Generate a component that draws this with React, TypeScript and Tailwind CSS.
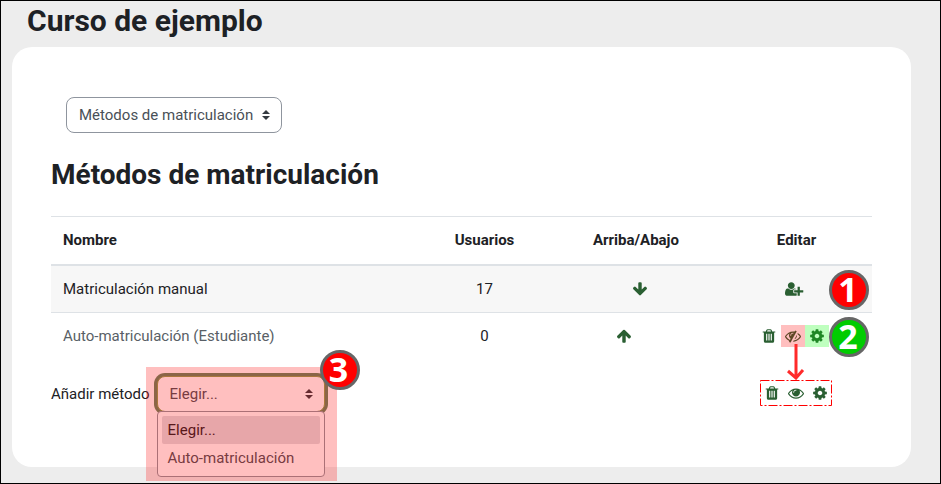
import { useState } from 'react';
import type { ReactNode } from 'react';
import clsx from 'clsx';

const iconPaths = {
  trash: 'M704 1376v-704q0-14-9-23t-23-9h-64q-14 0-23 9t-9 23v704q0 14 9 23t23 9h64q14 0 23-9t9-23zm256 0v-704q0-14-9-23t-23-9h-64q-14 0-23 9t-9 23v704q0 14 9 23t23 9h64q14 0 23-9t9-23zm256 0v-704q0-14-9-23t-23-9h-64q-14 0-23 9t-9 23v704q0 14 9 23t23 9h64q14 0 23-9t9-23zm-544-992h448l-48-117q-7-9-17-11h-317q-10 2-17 11zm928 32v64q0 14-9 23t-23 9h-96v948q0 83-47 143.5t-113 60.5h-832q-66 0-113-58.5t-47-141.5v-952h-96q-14 0-23-9t-9-23v-64q0-14 9-23t23-9h309l70-167q15-37 54-63t79-26h320q40 0 79 26t54 63l70 167h309q14 0 23 9t9 23z',
  cog: 'M1152 896q0-106-75-181t-181-75-181 75-75 181 75 181 181 75 181-75 75-181zm512-109v222q0 12-8 23t-20 13l-185 28q-19 54-39 91 35 50 107 138 10 12 10 25t-9 23q-27 37-99 108t-94 71q-12 0-26-9l-138-108q-44 23-91 38-16 136-29 186-7 28-36 28h-222q-14 0-24.5-8.5t-11.5-21.5l-28-184q-49-16-90-37l-141 107q-10 9-25 9-14 0-25-11-126-114-165-168-7-10-7-23 0-12 8-23 15-21 51-66.5t54-70.5q-27-50-41-99l-183-27q-13-2-21-12.5t-8-23.5v-222q0-12 8-23t19-13l186-28q14-46 39-92-40-57-107-138-10-12-10-24 0-10 9-23 26-36 98.5-107.5t94.5-71.5q13 0 26 10l138 107q44-23 91-38 16-136 29-186 7-28 36-28h222q14 0 24.5 8.5t11.5 21.5l28 184q49 16 90 37l142-107q9-9 24-9 13 0 25 10 129 119 165 170 7 8 7 22 0 12-8 23-15 21-51 66.5t-54 70.5q26 50 41 98l183 28q13 2 21 12.5t8 23.5z',
  eye: 'M1664 960q-152-236-381-353 61 104 61 225 0 185-131.5 316.5t-316.5 131.5-316.5-131.5-131.5-316.5q0-121 61-225-229 117-381 353 133 205 333.5 326.5t434.5 121.5 434.5-121.5 333.5-326.5zm-720-384q0-20-14-34t-34-14q-125 0-214.5 89.5t-89.5 214.5q0 20 14 34t34 14 34-14 14-34q0-86 61-147t147-61q20 0 34-14t14-34zm848 384q0 34-20 69-140 230-376.5 368.5t-499.5 138.5-499.5-139-376.5-368q-20-35-20-69t20-69q140-229 376.5-368t499.5-139 499.5 139 376.5 368q20 35 20 69z',
  eyeSlash: 'M555 1335l78-141q-87-63-136-159t-49-203q0-121 61-225-229 117-381 353 167 258 427 375zm389-759q0-20-14-34t-34-14q-125 0-214.5 89.5t-89.5 214.5q0 20 14 34t34 14 34-14 14-34q0-86 61-147t147-61q20 0 34-14t14-34zm363-191q0 7-1 9-106 189-316 567t-315 566l-49 89q-10 16-28 16-12 0-134-70-16-10-16-28 0-12 44-87-143-65-263.5-173t-208.5-245q-20-31-20-69t20-69q153-235 380-371t496-136q89 0 180 17l54-97q10-16 28-16 5 0 18 6t31 15.5 33 18.5 31.5 18.5 19.5 11.5q16 10 16 27zm37 447q0 139-79 253.5t-209 164.5l280-502q8 45 8 84zm448 128q0 35-20 69-39 64-109 145-150 172-347.5 267t-419.5 95l74-132q212-18 392.5-137t301.5-307q-115-179-282-294l63-112q95 64 182.5 153t144.5 182q20 34 20 69z',
  userPlus: 'M704 896q-159 0-271.5-112.5t-112.5-271.5 112.5-271.5 271.5-112.5 271.5 112.5 112.5 271.5-112.5 271.5-271.5 112.5zm960 128h352q13 0 22.5 9.5t9.5 22.5v192q0 13-9.5 22.5t-22.5 9.5h-352v352q0 13-9.5 22.5t-22.5 9.5h-192q-13 0-22.5-9.5t-9.5-22.5v-352h-352q-13 0-22.5-9.5t-9.5-22.5v-192q0-13 9.5-22.5t22.5-9.5h352v-352q0-13 9.5-22.5t22.5-9.5h192q13 0 22.5 9.5t9.5 22.5v352zm-736 224q0 52 38 90t90 38h256v238q-68 50-171 50h-874q-121 0-194-69t-73-190q0-53 3.5-103.5t14-109 26.5-108.5 43-97.5 62-81 85.5-53.5 111.5-20q19 0 39 17 79 61 154.5 91.5t164.5 30.5 164.5-30.5 154.5-91.5q20-17 39-17 132 0 217 96h-223q-52 0-90 38t-38 90v192z',
  arrowDown: 'M1675 832q0 53-37 90l-651 652q-39 37-91 37-53 0-90-37l-651-652q-38-36-38-90 0-53 38-91l74-75q39-37 91-37 53 0 90 37l294 294v-704q0-52 38-90t90-38h128q52 0 90 38t38 90v704l294-294q37-37 90-37 52 0 91 37l75 75q37 39 37 91z',
  arrowUp: 'M1675 971q0 51-37 90l-75 75q-38 38-91 38-54 0-90-38l-294-293v704q0 52-37.5 84.5t-90.5 32.5h-128q-53 0-90.5-32.5t-37.5-84.5v-704l-294 293q-36 38-90 38t-90-38l-75-75q-38-38-38-90 0-53 38-91l651-651q35-37 90-37 54 0 91 37l651 651q37 39 37 91z'
};

type IconName = keyof typeof iconPaths;

function Icon({ name }: { name: IconName }) {
  return (
    <svg viewBox="0 0 1792 1792" className="w-4 h-4 overflow-visible" fill="currentColor" aria-hidden="true">
      <path d={iconPaths[name]} />
    </svg>
  );
}

interface IconButtonProps {
  name: IconName;
  label: string;
  highlight?: 'red' | 'green';
}

function IconButton({ name, label, highlight }: IconButtonProps) {
  return (
    <button type="button" aria-label={label} className="relative block w-4 h-4 mr-2 text-[#2a5f32]">
      <Icon name={name} />
      {highlight && (
        <span
          className={clsx(
            'absolute -inset-x-1 -inset-y-[3px]',
            highlight === 'red' ? 'bg-[#ff0000]/25' : 'bg-[#00ff00]/25'
          )}
        />
      )}
    </button>
  );
}

function Spacer() {
  return <span className="w-4 h-4" />;
}

function Badge({ color, className, children }: { color: 'red' | 'green'; className: string; children: ReactNode }) {
  return (
    <span
      className={clsx(
        "absolute z-10 flex items-center justify-center w-10 h-10 pb-0.5 pr-0.5 rounded-full border-[3px] border-[#666666] font-['Open_Sans',sans-serif] text-[34px] leading-none font-bold text-white",
        color === 'red' ? 'bg-[#ff0000]' : 'bg-[#00cc00]',
        className
      )}
    >
      {children}
    </span>
  );
}

function SelectCaret({ className }: { className: string }) {
  return (
    <svg viewBox="0 0 4 5" className={clsx('absolute w-2 h-[10px] pointer-events-none', className)} fill="#343a40" aria-hidden="true">
      <path d="M2 0L0 2h4zm0 5L0 3h4z" />
    </svg>
  );
}

const options = ['Elegir...', 'Auto-matriculación'];

export default function App() {
  const [section, setSection] = useState('metodos');
  const [method, setMethod] = useState(options[0]);

  return (
    <div className="min-h-screen border border-black bg-[#ededed] pt-[2px] pr-[29px] pb-4 pl-[11px] font-[Roboto,sans-serif] text-[15px] leading-[23px] text-[#1d2125]">
      <h1 className="px-[15px] pb-2 text-[30px] leading-9 font-bold">Curso de ejemplo</h1>

      <main className="rounded-[20px] bg-white pt-[50px] pr-[39px] pb-[55px] pl-[39px]">
        {/* Navegación */}
        <div className="relative inline-block ml-[15px]">
          <select
            aria-label="Navegación"
            value={section}
            onChange={(e) => setSection(e.target.value)}
            className="block h-9 appearance-none rounded-lg border border-[#8f959e] bg-white pl-3 pr-[27px] text-[#495057]"
          >
            <option value="metodos">Métodos de matriculación</option>
          </select>
          <SelectCaret className="right-3 top-[13px]" />
        </div>

        <h2 className="mt-6 mb-[23px] text-[28px] leading-9 font-bold">Métodos de matriculación</h2>

        {/* Tabla de métodos */}
        <table className="w-full table-fixed border-collapse border-t border-[#dee2e6] text-center">
          <thead>
            <tr className="border-b-2 border-[#dee2e6]">
              <th className="p-3 text-left">Nombre</th>
              <th className="w-[133px] p-3">Usuarios</th>
              <th className="w-[170px] p-3">Arriba/Abajo</th>
              <th className="w-[151px] p-3">Editar</th>
            </tr>
          </thead>
          <tbody className="leading-[22px]">
            <tr className="border-b border-[#dee2e6] bg-[#f7f7f7]">
              <td className="p-3 text-left">Matriculación manual</td>
              <td className="p-3">17</td>
              <td className="p-3">
                <div className="flex justify-center">
                  <Spacer />
                  <IconButton name="arrowDown" label="Abajo" />
                </div>
              </td>
              <td className="relative p-3">
                <div className="flex justify-center">
                  <IconButton name="userPlus" label="Matricular usuarios" />
                </div>
                <Badge color="red" className="right-[3px] top-1">1</Badge>
              </td>
            </tr>
            <tr>
              <td className="p-3 text-left text-[#595f66]">Auto-matriculación (Estudiante)</td>
              <td className="p-3">0</td>
              <td className="p-3">
                <div className="flex justify-center">
                  <IconButton name="arrowUp" label="Arriba" />
                  <Spacer />
                </div>
              </td>
              <td className="relative p-3">
                <div className="flex justify-center">
                  <IconButton name="trash" label="Eliminar" />
                  <IconButton name="eyeSlash" label="Habilitar" highlight="red" />
                  <IconButton name="cog" label="Editar" highlight="green" />
                </div>
                <Badge color="green" className="right-[3px] top-1">2</Badge>
              </td>
            </tr>
          </tbody>
        </table>

        {/* Añadir método */}
        <div className="mt-[17px] flex items-center justify-between">
          <div className="flex items-center gap-[7px]">
            <label htmlFor="addMethod">Añadir método</label>
            <div className="relative w-[168px]">
              <select
                id="addMethod"
                value={method}
                onChange={(e) => setMethod(e.target.value)}
                className="block w-full h-9 appearance-none rounded-lg border border-[#8f9f50] bg-white pl-3 pr-7 text-[#495057] ring-3 ring-[#64875f]"
              >
                {options.map((option) => (
                  <option key={option}>{option}</option>
                ))}
              </select>
              <SelectCaret className="right-3 top-[13px]" />

              {/* Lista desplegada */}
              <ul className="absolute inset-x-0 top-[35px] rounded border border-[#8f959e] bg-white p-1">
                {options.map((option) => (
                  <li
                    key={option}
                    className={clsx(
                      'h-7 rounded-xs px-[6px] leading-7',
                      option === method ? 'bg-[#dfdde2] text-[#1d2125]' : 'text-[#495057]'
                    )}
                  >
                    {option}
                  </li>
                ))}
              </ul>
              <span className="absolute -left-[11px] -right-3 -top-[9px] h-[114px] bg-[#ff0000]/25 pointer-events-none" />
              <Badge color="red" className="-right-[35px] -top-[26px]">3</Badge>
            </div>
          </div>

          <div className="relative mr-9 mb-0.5 flex h-[26px] items-center pl-1">
            <svg className="absolute inset-x-0 top-0 w-[72px] h-[26px] pointer-events-none" fill="none" stroke="#ff0000" aria-hidden="true">
              <rect x="0.5" y="0.5" width="71" height="25" strokeDasharray="9 2 2 2" />
            </svg>
            <svg viewBox="0 0 18 36" className="absolute left-[27px] bottom-[26px] w-[18px] h-9" fill="none" stroke="#ff2a2a" strokeWidth="3" aria-hidden="true">
              <path d="M9 0v33M1 27l8 7 7-8" />
            </svg>
            <IconButton name="trash" label="Eliminar" />
            <IconButton name="eye" label="Deshabilitar" />
            <IconButton name="cog" label="Editar" />
          </div>
        </div>
      </main>
    </div>
  );
}
